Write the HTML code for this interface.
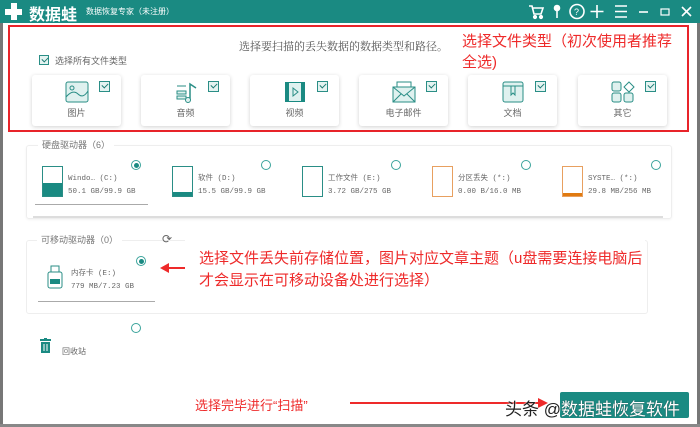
<!DOCTYPE html>
<html><head><meta charset="utf-8"><style>
*{margin:0;padding:0;box-sizing:border-box}
body{width:700px;height:427px;position:relative;background:#fff;font-family:"Liberation Sans","Noto Sans CJK SC",sans-serif;overflow:hidden;color:#555}
.a{position:absolute}
.tb{left:0;top:0;width:700px;height:23px;background:#1a8a82}
.card{position:absolute;top:75px;width:89px;height:51px;background:#fff;border-radius:3px;box-shadow:0 1px 4px rgba(0,0,0,.18)}
.ck{position:absolute;width:11px;height:11px;border:1px solid #2a8e86;background:#e4f3f1}
.card .ck{left:67px;top:6px}
.ck:after{content:"";position:absolute;left:2px;top:1px;width:5px;height:3px;border-left:1.5px solid #1a7a72;border-bottom:1.5px solid #1a7a72;transform:rotate(-45deg)}
.card .lb{position:absolute;left:0;right:0;top:31px;text-align:center;font-size:9px;color:#666}
.card svg{position:absolute;left:33px;top:6px}
.rad{position:absolute;width:10px;height:10px;border:1px solid #3aa39b;border-radius:50%;background:#fff}
.rad.on:after{content:"";position:absolute;left:1.5px;top:1.5px;width:5px;height:5px;border-radius:50%;background:#1a8a82}
.drv{position:absolute;font-size:7.5px;color:#666;line-height:13px;font-family:"Liberation Mono","Noto Sans CJK SC",monospace}
.di{position:absolute;width:21px;height:31px;border:1px solid #2a8e86;background:#fff}
.red{color:#ee2a2a;font-family:"Liberation Sans","Noto Sans CJK SC",sans-serif}
</style></head><body>
<div class="a tb"></div>
<div class="a" style="left:5px;top:3px;width:17px;height:17px">
<div class="a" style="left:6px;top:0;width:6px;height:17px;background:#fff"></div>
<div class="a" style="left:0;top:6px;width:17px;height:6px;background:#fff"></div></div>
<div class="a" style="left:29px;top:1px;font-size:16px;font-weight:bold;color:#fff">数据蛙</div>
<div class="a" style="left:86px;top:6px;font-size:8px;color:#fff">数据恢复专家（未注册）</div>
<svg class="a" style="left:525px;top:3px" width="170" height="17" fill="none" stroke="#fff" stroke-width="1.6">
<path d="M4 3h3l2 8h7l2-6H8"/><circle cx="10" cy="14" r="1.3" fill="#fff"/><circle cx="16" cy="14" r="1.3" fill="#fff"/>
<circle cx="32" cy="5" r="2.5" fill="#fff"/><path d="M32 8v7"/>
<circle cx="52" cy="8.5" r="7"/><text x="49" y="12" font-size="9" fill="#fff" stroke="none" font-family="Liberation Sans">?</text>
<path d="M72 2v13M65.5 8.5h13"/>
<path d="M90 3h12M90 8.5h12M90 14h12"/>
<path d="M114 9h9"/>
<rect x="136" y="6" width="8" height="6" stroke-width="1.2"/>
<path d="M157 4l9 9M166 4l-9 9"/>
</svg>
<div class="a" style="left:0;top:23px;width:3px;height:404px;background:#777"></div>
<div class="a" style="left:697px;top:23px;width:3px;height:404px;background:#777"></div>
<div class="a" style="left:0;top:424px;width:700px;height:3px;background:#888"></div>

<div class="a" style="left:8px;top:25px;width:681px;height:107px;border:2px solid #e8242a"></div>
<div class="a" style="left:239px;top:38px;font-size:11px;color:#555;font-family:'Liberation Serif','Noto Serif CJK SC',serif">选择要扫描的丢失数据的数据类型和路径。</div>
<div class="a red" style="left:462px;top:31px;font-size:15px;line-height:21px;width:210px">选择文件类型（初次使用者推荐全选)</div>
<div class="ck" style="left:39px;top:55px;width:10px;height:10px"></div>
<div class="a" style="left:55px;top:54px;font-size:9px;color:#666">选择所有文件类型</div>

<div class="card" style="left:32px"><svg width="24" height="22"><rect x="1" y="1" width="22" height="20" rx="2" fill="#dff1ef" stroke="#2a8e86"/><circle cx="7" cy="7" r="2" fill="none" stroke="#2a8e86"/><path d="M1 16 Q8 8 13 13 T23 10" fill="none" stroke="#2a8e86"/></svg><div class="ck"></div><div class="lb">图片</div></div>
<div class="card" style="left:141px"><svg width="24" height="22"><path d="M3 10h9v3H3zM3 15h9v3H3zM3 5h9" fill="#dff1ef" stroke="#2a8e86"/><path d="M16 19V3l6 4" fill="none" stroke="#2a8e86" stroke-width="1.5"/><circle cx="14" cy="19" r="2.5" fill="#dff1ef" stroke="#2a8e86"/></svg><div class="ck"></div><div class="lb">音频</div></div>
<div class="card" style="left:250px"><svg width="24" height="22"><rect x="2" y="1" width="20" height="20" fill="#1a8a82"/><rect x="6" y="2" width="12" height="18" fill="#dff1ef"/><path d="M10 7l5 4-5 4z" fill="none" stroke="#2a8e86"/></svg><div class="ck"></div><div class="lb">视频</div></div>
<div class="card" style="left:359px"><svg width="24" height="22"><rect x="5" y="1" width="14" height="8" fill="#fff" stroke="#2a8e86"/><rect x="1" y="6" width="22" height="15" fill="#dff1ef" stroke="#2a8e86"/><path d="M1 6l11 9 11-9M1 21l8-8M23 21l-8-8" fill="none" stroke="#2a8e86"/></svg><div class="ck"></div><div class="lb">电子邮件</div></div>
<div class="card" style="left:468px"><svg width="24" height="22"><rect x="2" y="1" width="20" height="20" rx="2" fill="#dff1ef" stroke="#2a8e86"/><path d="M2 5h20M10 5v9l2-2 2 2V5" fill="none" stroke="#2a8e86"/></svg><div class="ck"></div><div class="lb">文档</div></div>
<div class="card" style="left:578px"><svg width="24" height="22"><rect x="1" y="1" width="9" height="9" rx="2" fill="#dff1ef" stroke="#2a8e86"/><path d="M18 1l5 5-5 5-5-5z" fill="#fff" stroke="#2a8e86"/><rect x="1" y="12" width="9" height="9" rx="2" fill="#dff1ef" stroke="#2a8e86"/><rect x="13" y="12" width="9" height="9" rx="2" fill="#dff1ef" stroke="#2a8e86"/></svg><div class="ck"></div><div class="lb">其它</div></div>

<div class="a" style="left:26px;top:145px;width:646px;height:74px;border:1px solid #eee;border-radius:3px;box-shadow:0 1px 2px rgba(0,0,0,.05)"></div>
<div class="a" style="left:38px;top:138px;padding:0 4px;background:#fff;font-size:9px;color:#777">硬盘驱动器（6）</div>
<div class="a" style="left:33px;top:216px;width:630px;height:2px;background:#ddd"></div>
<div class="rad on" style="left:131px;top:160px"></div>
<div class="rad" style="left:261px;top:160px"></div>
<div class="rad" style="left:391px;top:160px"></div>
<div class="rad" style="left:521px;top:160px"></div>
<div class="rad" style="left:651px;top:160px"></div>
<div class="di" style="left:42px;top:166px"><div class="a" style="left:0;bottom:0;width:19px;height:13px;background:#1a8a82"></div></div>
<div class="drv" style="left:68px;top:173px">Windo… (C:)<br>50.1 GB/99.9 GB</div>
<div class="a" style="left:35px;top:204px;width:113px;height:1px;background:#aaa"></div>
<div class="di" style="left:172px;top:166px"><div class="a" style="left:0;bottom:0;width:19px;height:4px;background:#1a8a82"></div></div>
<div class="drv" style="left:198px;top:173px">软件 (D:)<br>15.5 GB/99.9 GB</div>
<div class="di" style="left:302px;top:166px"></div>
<div class="drv" style="left:328px;top:173px">工作文件 (E:)<br>3.72 GB/275 GB</div>
<div class="di" style="left:432px;top:166px;border-color:#e8a060"></div>
<div class="drv" style="left:458px;top:173px">分区丢失 (*:)<br>0.00 B/16.0 MB</div>
<div class="di" style="left:562px;top:166px;border-color:#e8a060"><div class="a" style="left:0;bottom:0;width:19px;height:3px;background:#e07a10"></div></div>
<div class="drv" style="left:588px;top:173px">SYSTE… (*:)<br>29.8 MB/256 MB</div>

<div class="a" style="left:26px;top:240px;width:622px;height:74px;border:1px solid #eee;border-radius:3px"></div>
<div class="a" style="left:37px;top:233px;padding:0 4px;background:#fff;font-size:9px;color:#777">可移动驱动器（0）</div>
<div class="a" style="left:162px;top:232px;font-size:12px;color:#666">⟳</div>
<div class="a" style="left:185px;top:238px;width:460px;height:62px;background:#fff"></div>
<div class="a red" style="left:199px;top:248px;font-size:15px;line-height:22px;white-space:nowrap">选择文件丢失前存储位置，图片对应文章主题（u盘需要连接电脑后<br>才会显示在可移动设备处进行选择）</div>
<div class="a" style="left:168px;top:267px;width:17px;height:2px;background:#ee2a2a"></div>
<div class="a" style="left:160px;top:263px;border-right:9px solid #ee2a2a;border-top:5px solid transparent;border-bottom:5px solid transparent"></div>
<div class="rad on" style="left:136px;top:256px"></div>
<svg class="a" style="left:47px;top:265px" width="16" height="24"><rect x="4" y="1" width="8" height="6" fill="#fff" stroke="#2a8e86"/><rect x="1" y="7" width="14" height="16" rx="2" fill="#fff" stroke="#2a8e86"/><rect x="3" y="14" width="10" height="5" fill="#1a8a82"/></svg>
<div class="drv" style="left:71px;top:268px">内存卡 (E:)<br>779 MB/7.23 GB</div>
<div class="a" style="left:38px;top:301px;width:117px;height:1px;background:#aaa"></div>

<div class="rad" style="left:131px;top:323px"></div>
<svg class="a" style="left:40px;top:338px" width="11" height="15"><rect x="0" y="1" width="11" height="2" fill="#1a8a82"/><rect x="4" y="0" width="3" height="2" fill="#1a8a82"/><rect x="1" y="4" width="9" height="11" fill="#1a8a82"/><path d="M4 6v7M7 6v7" stroke="#fff"/></svg>
<div class="a" style="left:62px;top:346px;font-size:8px;color:#666">回收站</div>

<div class="a red" style="left:195px;top:395px;font-size:13px">选择完毕进行“扫描”</div>
<div class="a" style="left:350px;top:402px;width:190px;height:2px;background:#ee2a2a"></div>
<div class="a" style="left:538px;top:398px;border-left:10px solid #ee2a2a;border-top:5px solid transparent;border-bottom:5px solid transparent"></div>
<div class="a" style="left:560px;top:392px;width:129px;height:26px;background:#1a8a82;border-radius:2px"></div>
<div class="a" style="left:505px;top:395px;font-size:17px;white-space:nowrap"><span style="color:#222;text-shadow:0 0 2px #fff,0 0 1px #fff">头条 @</span><span style="color:#fff;text-shadow:0 0 1px #333">数据蛙恢复软件</span></div>
</body></html>
